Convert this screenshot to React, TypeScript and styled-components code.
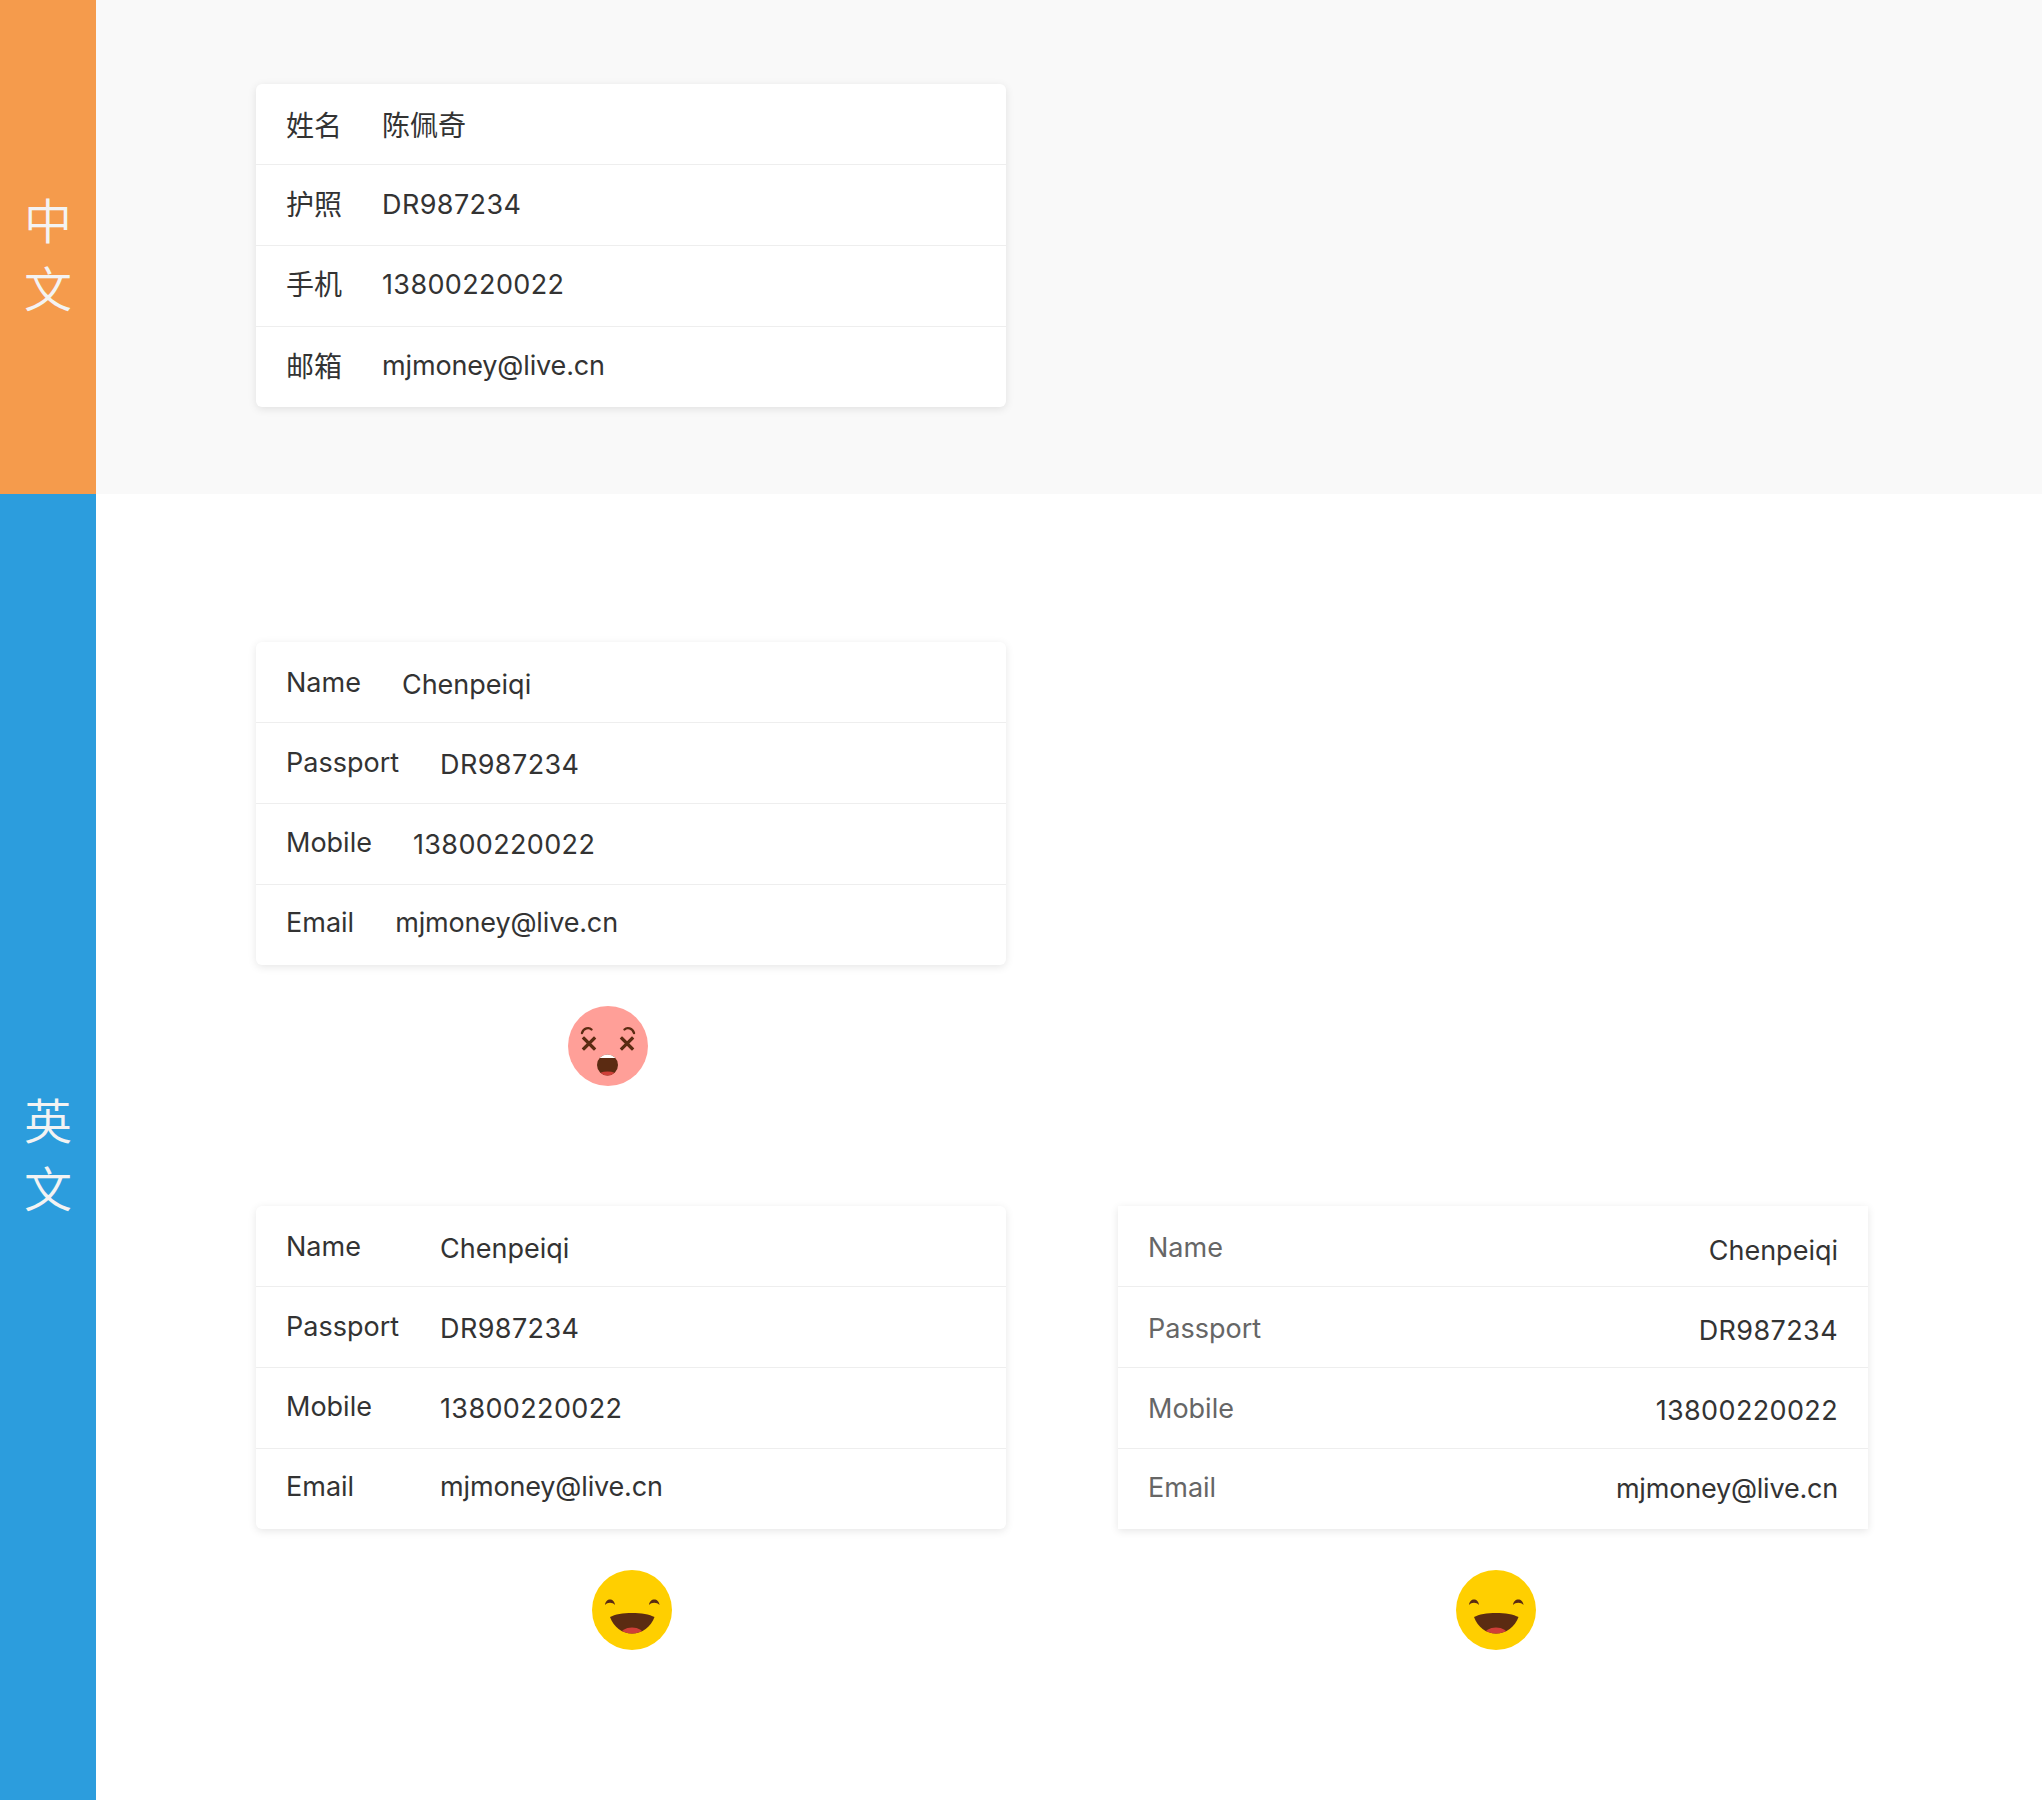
import styled, { createGlobalStyle } from "styled-components";

const GlobalStyle = createGlobalStyle`
  html, body {
    margin: 0;
    padding: 0;
    background: #fff;
    font-family: Inter, "Noto Sans CJK SC", "Noto Sans", sans-serif;
    color: #333;
  }
`;

const Page = styled.div`
  width: 2042px;
  height: 1800px;
  overflow: hidden;
`;

const Section = styled.section<{ $height: number; $bg: string }>`
  display: flex;
  height: ${(p) => p.$height}px;
  background: ${(p) => p.$bg};
`;

const SideTitle = styled.div<{ $bg: string }>`
  flex: 0 0 96px;
  display: flex;
  flex-direction: column;
  align-items: center;
  justify-content: center;
  padding-top: 9px;
  box-sizing: border-box;
  background: ${(p) => p.$bg};
  color: #f3f3f3;
  font-family: "Noto Sans CJK SC", sans-serif;
  font-size: 48px;
  font-weight: 350;
  line-height: 68px;
`;

const Content = styled.div<{ $top: number }>`
  flex: 1;
  display: flex;
  flex-direction: column;
  gap: 120px;
  padding: ${(p) => p.$top}px 0 0 160px;
`;

const Pair = styled.div`
  display: flex;
  gap: 112px;
`;

const Demo = styled.div`
  width: 750px;
  display: flex;
  flex-direction: column;
  align-items: center;
  gap: 41px;
`;

const Card = styled.div<{ $square?: boolean }>`
  width: 100%;
  background: #fff;
  border-radius: ${(p) => (p.$square ? 0 : 6)}px;
  box-shadow: 0 2px 8px rgba(0, 0, 0, 0.1);
`;

// the text creeps up a pixel per row against the dividers, $lift keeps that
const Row = styled.div<{ $spread?: boolean; $lift: number }>`
  box-sizing: border-box;
  height: 80px;
  padding: 0 30px ${(p) => p.$lift * 2}px;
  display: flex;
  align-items: center;
  justify-content: ${(p) => (p.$spread ? "space-between" : "flex-start")};
  font-size: 27px;
  & + & {
    height: 81px;
    border-top: 1px solid #eee;
  }
`;

const Label = styled.span<{ $width?: number; $muted?: boolean; $drop?: number }>`
  flex: none;
  width: ${(p) => (p.$width ? `${p.$width}px` : "auto")};
  margin-right: ${(p) => (p.$width ? 0 : 41)}px;
  margin-top: ${(p) => p.$drop ?? 0}px;
  color: ${(p) => (p.$muted ? "#666" : "#333")};
  &:lang(zh) {
    font-size: 28px;
    margin-right: 40px;
  }
`;

const Value = styled.span<{ $drop?: number; $tracking?: number }>`
  margin-top: ${(p) => p.$drop ?? 0}px;
  letter-spacing: ${(p) => p.$tracking ?? 0}px;
  color: #333;
  &:lang(zh) {
    font-size: 28px;
  }
`;

const Emoji = styled.svg<{ $nudge?: number }>`
  display: block;
  width: 80px;
  height: 80px;
  margin-left: ${(p) => Math.max(p.$nudge ?? 0, 0)}px;
  margin-right: ${(p) => Math.max(-(p.$nudge ?? 0), 0)}px;
`;

const DeadFace = ({ nudge }: { nudge?: number }) => (
  <Emoji viewBox="0 0 80 80" $nudge={nudge}>
    <circle cx="40" cy="40" r="40" fill="#ff9f98" />
    <g fill="none" stroke="#5b2b12" strokeWidth="3.2" strokeLinecap="square">
      <path d="M16 32.500l10 10M26 32.500l-10 10M54 32.500l10 10M64 32.500l-10 10" />
    </g>
    <g fill="none" stroke="#5b2b12" strokeWidth="2.4" strokeLinecap="round">
      <path d="M14 27c1.500-5 7-6 9.500-3.500M56.500 23.500c2.500-2.500 8-1.500 9.500 3.500" />
    </g>
    <clipPath id="deadMouth">
      <circle cx="39.500" cy="59" r="10.500" />
    </clipPath>
    <g clipPath="url(#deadMouth)">
      <rect x="28" y="48" width="24" height="22" fill="#5b2b12" />
      <rect x="28" y="47" width="24" height="5" fill="#fff" />
      <ellipse cx="39.500" cy="70" rx="10" ry="4.500" fill="#cf3f38" />
    </g>
  </Emoji>
);

const HappyFace = ({ nudge, id }: { nudge?: number; id: string }) => (
  <Emoji viewBox="0 0 80 80" $nudge={nudge}>
    <circle cx="40" cy="40" r="40" fill="#ffcf00" />
    <path
      d="M13 35c.5-7.500 9.500-7.500 10 0-2.500-3-7.500-3-10 0zM57 35c.5-7.500 10-7.500 10.500 0-2.500-3-8-3-10.500 0z"
      fill="#5b2b12"
    />
    <clipPath id={id}>
      <path d="M18 47c9-5.500 35-5.500 44.500 0C59 57 50 63.500 40 63.500S21.500 57 18 47z" />
    </clipPath>
    <g clipPath={`url(#${id})`}>
      <rect x="14" y="38" width="52" height="28" fill="#5b2b12" />
      <ellipse cx="40" cy="65" rx="12" ry="7.500" fill="#cf3f38" />
    </g>
  </Emoji>
);

type RowData = {
  label: string;
  value: string;
  drop?: number;
  labelDrop?: number;
  tracking?: number;
  cjk?: boolean;
};

const zhRows: RowData[] = [
  { label: "姓名", value: "陈佩奇", cjk: true },
  { label: "护照", value: "DR987234", labelDrop: -2, tracking: 0.4 },
  { label: "手机", value: "13800220022", labelDrop: -3, tracking: 0.36 },
  { label: "邮箱", value: "mjmoney@live.cn", drop: 2, labelDrop: 2, tracking: -0.15 },
];

const enRows: RowData[] = [
  { label: "Name", value: "Chenpeiqi", drop: 4 },
  { label: "Passport", value: "DR987234", drop: 4, tracking: 0.4 },
  { label: "Mobile", value: "13800220022", drop: 4, tracking: 0.36 },
  { label: "Email", value: "mjmoney@live.cn", tracking: -0.15 },
];

const spreadRows: RowData[] = [
  { label: "Name", value: "Chenpeiqi", drop: 8, labelDrop: 3 },
  { label: "Passport", value: "DR987234", drop: 8, labelDrop: 5, tracking: 0.4 },
  { label: "Mobile", value: "13800220022", drop: 8, labelDrop: 5, tracking: 0.36 },
  { label: "Email", value: "mjmoney@live.cn", drop: 5, labelDrop: 3, tracking: -0.2 },
];

const App = () => {
  return (
    <Page>
      <GlobalStyle />
      <Section $height={494} $bg="#f9f9f9">
        <SideTitle $bg="#f59b4c">
          <span>中</span>
          <span>文</span>
        </SideTitle>
        <Content $top={84}>
          <Demo>
            <Card>
              {zhRows.map((row, i) => (
                <Row key={row.label} $lift={i}>
                  <Label lang="zh" $drop={row.labelDrop}>
                    {row.label}
                  </Label>
                  <Value lang={row.cjk ? "zh" : "en"} $drop={row.drop} $tracking={row.tracking}>
                    {row.value}
                  </Value>
                </Row>
              ))}
            </Card>
          </Demo>
        </Content>
      </Section>
      <Section $height={1306} $bg="#fff">
        <SideTitle $bg="#2c9ddd">
          <span>英</span>
          <span>文</span>
        </SideTitle>
        <Content $top={148}>
          <Demo>
            <Card>
              {enRows.map((row, i) => (
                <Row key={row.label} $lift={i}>
                  <Label>{row.label}</Label>
                  <Value $drop={row.drop} $tracking={row.tracking}>
                    {row.value}
                  </Value>
                </Row>
              ))}
            </Card>
            <DeadFace nudge={-46} />
          </Demo>
          <Pair>
            <Demo>
              <Card>
                {enRows.map((row, i) => (
                  <Row key={row.label} $lift={i}>
                    <Label $width={154}>{row.label}</Label>
                    <Value $drop={row.drop} $tracking={row.tracking}>
                      {row.value}
                    </Value>
                  </Row>
                ))}
              </Card>
              <HappyFace id="happyLeft" nudge={1} />
            </Demo>
            <Demo>
              <Card $square>
                {spreadRows.map((row, i) => (
                  <Row key={row.label} $spread $lift={i}>
                    <Label $muted $width={154} $drop={row.labelDrop}>
                      {row.label}
                    </Label>
                    <Value $drop={row.drop} $tracking={row.tracking}>
                      {row.value}
                    </Value>
                  </Row>
                ))}
              </Card>
              <HappyFace id="happyRight" nudge={6} />
            </Demo>
          </Pair>
        </Content>
      </Section>
    </Page>
  );
};

export default App;
